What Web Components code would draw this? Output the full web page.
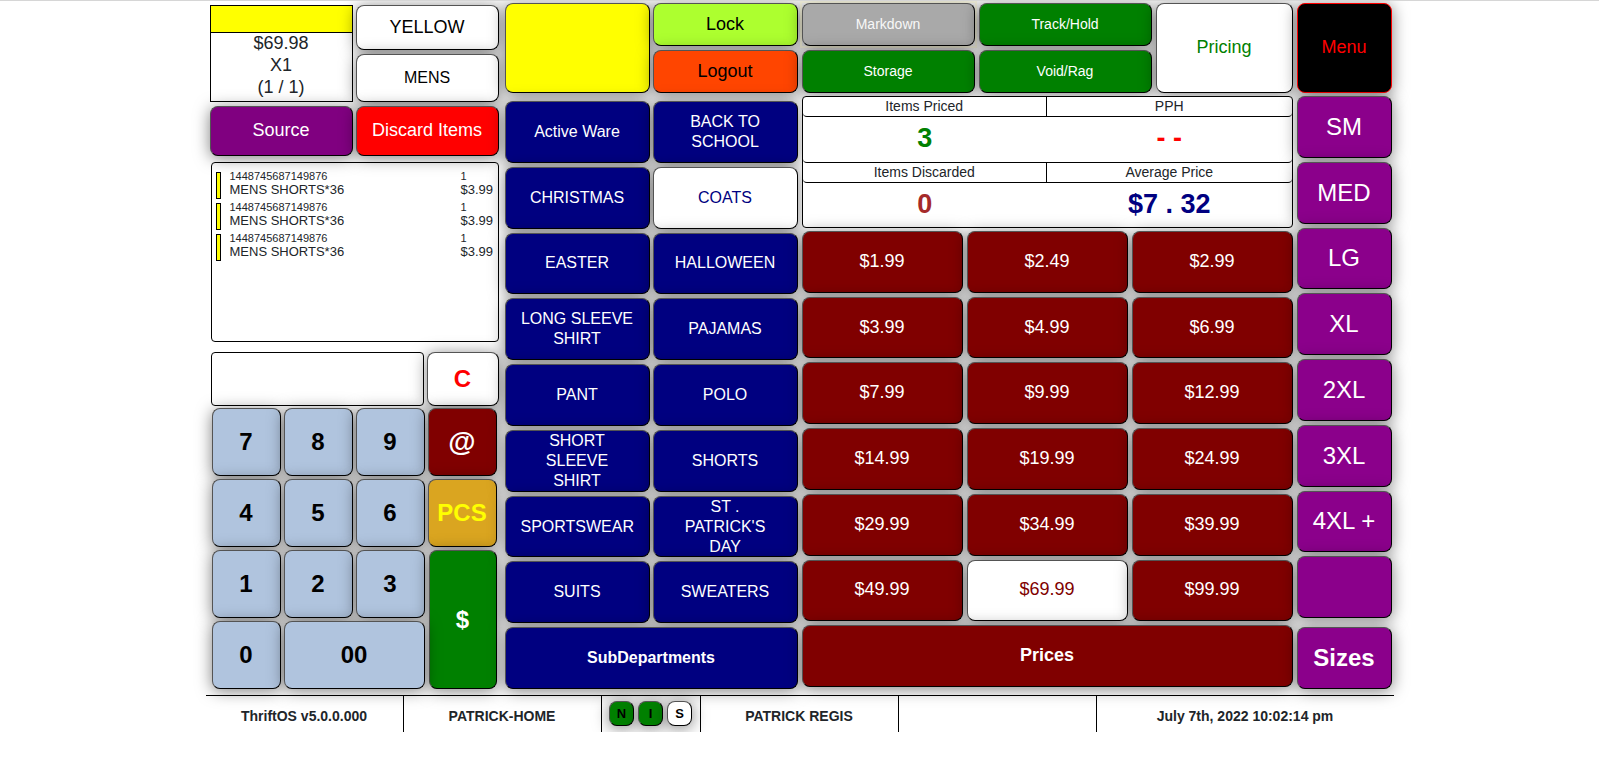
<!DOCTYPE html>
<html lang="en">
<head>
<meta charset="utf-8">
<meta name="viewport" content="width=device-width, initial-scale=1">
<title>ThriftOS</title>
<style>
  body { margin: 0; background: #fff; color: #212529; font-family: "Liberation Sans", Arial, sans-serif; border-top: 1px solid #d6d6d6; }
</style>
</head>
<body>
<pos-app></pos-app>
<script>
const define = (name, html, setup) => {
  const template = document.createElement('template');
  template.innerHTML = html;
  customElements.define(name, class extends HTMLElement {
    constructor() {
      super();
      this.attachShadow({ mode: 'open' }).append(template.content.cloneNode(true));
    }
    connectedCallback() { if (setup) setup(this, this.shadowRoot); }
  });
};

/* Push button: tone picks the colours, size the text size. */
define('pos-key', `
<style>
  :host { display: grid; min-width: 0; min-height: 0; --bg: #fff; --fg: #000; font-size: 16px; }
  button {
    box-sizing: border-box; width: 100%; min-width: 0; margin: 0; padding: 0 2px;
    font-family: inherit; font-size: inherit; font-weight: inherit; line-height: 20px;
    color: var(--fg); background: var(--bg);
    border: 1px outset #000; border-radius: 8px; cursor: pointer;
    box-shadow: 0 2px 16px 0 rgba(0,0,0,.5);
  }
  :host([size="xs"]) { font-size: 13px; }
  :host([size="sm"]) { font-size: 14px; }
  :host([size="lg"]) { font-size: 18px; }
  :host([size="sm"]) button, :host([size="lg"]) button { padding-bottom: 2px; }
  :host([size="xl"]) { font-size: 24px; }
  :host([size="xxl"]) { font-size: 28px; }
  :host([bold]) { font-weight: bold; }
  /* Long labels wrap inside the key and never make its row taller. */
  :host([wrap]) { contain: size; grid-template-rows: minmax(0, 1fr); }
  :host([wrap]) button { padding: 0 15px; min-height: 0; }
  :host([tone="navy"]) { --bg: #000080; --fg: #fff; }
  :host([tone="navy-on"]) { --fg: #000080; }
  :host([tone="maroon"]) { --bg: #800000; --fg: #fff; }
  :host([tone="maroon-on"]) { --fg: #800000; }
  :host([tone="size"]) { --bg: #8b008b; --fg: #fff; }
  :host([tone="purple"]) { --bg: #800080; --fg: #fff; }
  :host([tone="red"]) { --bg: #f00; --fg: #fff; }
  :host([tone="yellow"]) { --bg: #ff0; }
  :host([tone="lime"]) { --bg: #adff2f; }
  :host([tone="orange"]) { --bg: #ff4500; }
  :host([tone="green"]) { --bg: #008000; --fg: #fff; }
  :host([tone="lamp"]) { --bg: #008000; }
  :host([tone="green-on"]) { --fg: #008000; }
  :host([tone="steel"]) { --bg: #b0c4de; }
  :host([tone="gold"]) { --bg: #daa520; --fg: #ff0; }
  :host([tone="clear"]) { --fg: #f00; }
  :host([tone="menu"]) { --bg: #000; --fg: #f00; }
  :host([tone="menu"]) button { border: 1px solid #f00; }
  :host([tone="gray"]) { --bg: #a9a9a9; --fg: #f8f8f8; outline: 2px solid rgba(238,232,170,.3); }
</style>
<button type="button"><slot></slot></button>`, (host, root) => {
  const button = root.querySelector('button');
  button.disabled = host.hasAttribute('disabled');
  if (host.hasAttribute('label')) button.setAttribute('aria-label', host.getAttribute('label'));
});

/* Price tag preview: colour strip above price and counts. */
define('tag-card', `
<style>
  :host { display: block; box-sizing: border-box; border: 1px solid #000; background: #fff; text-align: center; font-size: 18px; line-height: 20px; }
  .strip { height: 26px; background: #ff0; border-bottom: 1px solid #000; }
  ::slotted(div) { height: 22px; }
</style>
<div class="strip"></div><slot></slot>`);

define('scan-item', `
<style>
  :host { display: grid; grid-template-columns: 5px minmax(0, 1fr) 32px; column-gap: 9px; height: 31px; line-height: 14px; font-size: 13px; }
  .swatch { box-sizing: border-box; height: 27px; margin-top: 3px; background: #ff0; border: 1px solid #000; }
  .small { font-size: 11px; }
</style>
<div class="swatch"></div>
<div><div class="small"><slot name="code"></slot></div><div><slot name="name"></slot></div></div>
<div><div class="small"><slot name="qty"></slot></div><div><slot name="price"></slot></div></div>`);

define('scan-list', `
<style>
  :host { display: block; box-sizing: border-box; border: 1px solid #000; border-radius: 4px; background: #fff; padding: 6px 5px 0 4px; }
</style>
<slot></slot>`);

define('stats-board', `
<style>
  :host { display: block; }
  .board { box-sizing: border-box; height: 132px; border: 1px solid #000; border-radius: 4px; background: #fff; display: grid; grid-template-rows: 20px 46px 20px 1fr; text-align: center; }
  .row { display: grid; grid-template-columns: 1fr 1fr; border-bottom: 1px solid #000; border-radius: 0 0 4px 4px; }
  .row:last-child { border-bottom: 0; }
  .head { font-size: 14px; line-height: 18px; }
  .head div:first-child { border-right: 1px solid #000; }
  .value { font-size: 27px; font-weight: bold; line-height: 42px; }
  .green { color: #008000; } .red { color: #f00; } .brown { color: #a52a2a; } .navy { color: #000080; }
</style>
<div class="board">
  <div class="row head"><div>Items Priced</div><div>PPH</div></div>
  <div class="row value"><div class="green">3</div><div class="red">- -</div></div>
  <div class="row head"><div>Items Discarded</div><div>Average Price</div></div>
  <div class="row value"><div class="brown">0</div><div class="navy">$7 . 32</div></div>
</div>`);

/* Tag preview, scanned items and keypad. */
define('scan-panel', `
<style>
  :host { display: block; padding: 4px 2px 0 0; }
  .top { display: grid; grid-template-columns: 1fr 1fr; grid-template-rows: 45px 48px 50px; gap: 4px 3px; }
  tag-card { grid-row: span 2; }
  scan-list { height: 180px; margin: 6px 0 10px 1px; }
  .entry { display: grid; grid-template-columns: minmax(0, 213fr) minmax(0, 72fr); column-gap: 3px; height: 54px; margin-left: 1px; }
  input { box-sizing: border-box; width: 100%; height: 100%; margin: 0; padding: 0 8px; border: 1px solid #000; border-radius: 4px; background: #fff; font: bold 24px "Liberation Sans", Arial, sans-serif; }
  .pad { display: grid; grid-template-columns: repeat(4, minmax(0, 1fr)); grid-auto-rows: 68px; gap: 3px; margin: 2px 2px 0; }
  .wide { grid-column: span 2; }
  .tall { grid-row: 3 / span 2; grid-column: 4; margin-left: 1px; }
</style>
<div class="top">
  <tag-card><div>$69.98</div><div>X1</div><div>(1 / 1)</div></tag-card>
  <pos-key size="lg">YELLOW</pos-key>
  <pos-key>MENS</pos-key>
  <pos-key tone="purple" size="lg">Source</pos-key>
  <pos-key tone="red" size="lg">Discard Items</pos-key>
</div>
<scan-list></scan-list>
<div class="entry">
  <input type="text" aria-label="Entry">
  <pos-key tone="clear" size="xl" bold>C</pos-key>
</div>
<div class="pad">
  <pos-key tone="steel" size="xl" bold>7</pos-key>
  <pos-key tone="steel" size="xl" bold>8</pos-key>
  <pos-key tone="steel" size="xl" bold>9</pos-key>
  <pos-key tone="maroon" size="xxl" bold>@</pos-key>
  <pos-key tone="steel" size="xl" bold>4</pos-key>
  <pos-key tone="steel" size="xl" bold>5</pos-key>
  <pos-key tone="steel" size="xl" bold>6</pos-key>
  <pos-key tone="gold" size="xl" bold>PCS</pos-key>
  <pos-key tone="steel" size="xl" bold>1</pos-key>
  <pos-key tone="steel" size="xl" bold>2</pos-key>
  <pos-key tone="steel" size="xl" bold>3</pos-key>
  <pos-key class="tall" tone="green" size="xl" bold>$</pos-key>
  <pos-key tone="steel" size="xl" bold>0</pos-key>
  <pos-key class="wide" tone="steel" size="xl" bold>00</pos-key>
</div>`, (host, root) => {
  const item = '<scan-item><span slot="code">1448745687149876</span><span slot="name">MENS SHORTS*36</span><span slot="qty">1</span><span slot="price">$3.99</span></scan-item>';
  root.querySelector('scan-list').innerHTML = item.repeat(3);
});

define('department-panel', `
<style>
  :host { display: grid; grid-template-rows: 90px 1fr; row-gap: 8px; padding-top: 2px; }
  .top { display: grid; grid-template-columns: 1fr 1fr; grid-template-rows: 1fr 1fr; gap: 4px 3px; }
  .tag { grid-row: span 2; }
  .grid { display: grid; grid-template-columns: 1fr 1fr; grid-template-rows: repeat(9, 1fr); gap: 4px 3px; }
  .total { grid-column: span 2; }
</style>
<div class="top">
  <pos-key class="tag" tone="yellow" label="Tag colour"></pos-key>
  <pos-key tone="lime" size="lg">Lock</pos-key>
  <pos-key tone="orange" size="lg">Logout</pos-key>
</div>
<div class="grid"></div>`, (host, root) => {
  const names = ['Active Ware', 'BACK TO SCHOOL', 'CHRISTMAS', 'COATS', 'EASTER', 'HALLOWEEN', 'LONG SLEEVE SHIRT', 'PAJAMAS', 'PANT', 'POLO', 'SHORT SLEEVE SHIRT', 'SHORTS', 'SPORTSWEAR', "ST . PATRICK'S DAY", 'SUITS', 'SWEATERS'];
  root.querySelector('.grid').innerHTML =
    names.map(n => `<pos-key wrap tone="${n === 'COATS' ? 'navy-on' : 'navy'}">${n}</pos-key>`).join('') +
    '<pos-key class="total" tone="navy" bold>SubDepartments</pos-key>';
});

define('price-panel', `
<style>
  :host { display: grid; grid-template-rows: 90px 132px 1fr; row-gap: 3px; padding: 2px 0; }
  .top { display: grid; grid-template-columns: minmax(0, 173fr) minmax(0, 173fr) minmax(0, 137fr); grid-template-rows: 1fr 1fr; gap: 4px; }
  .mode { grid-row: 1 / span 2; grid-column: 3; }
  .grid { display: grid; grid-template-columns: repeat(3, 1fr); grid-template-rows: repeat(7, 1fr); gap: 4px; }
  .total { grid-column: span 3; }
</style>
<div class="top">
  <pos-key tone="gray" size="sm" disabled>Markdown</pos-key>
  <pos-key tone="green" size="sm">Track/Hold</pos-key>
  <pos-key tone="green" size="sm">Storage</pos-key>
  <pos-key tone="green" size="sm">Void/Rag</pos-key>
  <pos-key class="mode" tone="green-on" size="lg">Pricing</pos-key>
</div>
<stats-board></stats-board>
<div class="grid"></div>`, (host, root) => {
  const prices = ['1.99', '2.49', '2.99', '3.99', '4.99', '6.99', '7.99', '9.99', '12.99', '14.99', '19.99', '24.99', '29.99', '34.99', '39.99', '49.99', '69.99', '99.99'];
  root.querySelector('.grid').innerHTML =
    prices.map(p => `<pos-key size="lg" tone="${p === '69.99' ? 'maroon-on' : 'maroon'}">$${p}</pos-key>`).join('') +
    '<pos-key class="total" tone="maroon" size="lg" bold>Prices</pos-key>';
});

define('size-panel', `
<style>
  :host { display: grid; grid-template-rows: 90px 1fr 62px; padding-top: 2px; }
  .grid { display: grid; grid-template-rows: repeat(8, 1fr); row-gap: 4px; padding: 3px 0 9px; }
</style>
<pos-key tone="menu" size="lg">Menu</pos-key>
<div class="grid"></div>
<pos-key tone="size" size="xl" bold>Sizes</pos-key>`, (host, root) => {
  root.querySelector('.grid').innerHTML = ['SM', 'MED', 'LG', 'XL', '2XL', '3XL', '4XL +', '']
    .map(s => `<pos-key tone="size" size="xl"${s ? '' : ' label="Unassigned size"'}>${s}</pos-key>`).join('');
});

define('status-bar', `
<style>
  :host { display: grid; grid-template-columns: 2fr 2fr 1fr 2fr 2fr 3fr; height: 36px; border-top: 1px solid #000; font-size: 14px; font-weight: bold; line-height: 40px; text-align: center; }
  .cell { height: 36px; border-right: 1px solid #000; min-width: 0; box-sizing: border-box; }
  .cell:last-child { border-right: 0; }
  .lamps { display: grid; grid-template-columns: repeat(3, 25px); grid-template-rows: 25px; gap: 4px; justify-content: center; padding-top: 5px; }
</style>
<div class="cell">ThriftOS v5.0.0.000</div>
<div class="cell">PATRICK-HOME</div>
<div class="cell lamps">
  <pos-key tone="lamp" size="xs" bold>N</pos-key>
  <pos-key tone="lamp" size="xs" bold>I</pos-key>
  <pos-key size="xs" bold>S</pos-key>
</div>
<div class="cell">PATRICK REGIS</div>
<div class="cell"></div>
<div class="cell"><time datetime="2022-07-07T22:02:14">July 7th, 2022 10:02:14 pm</time></div>`);

define('pos-app', `
<style>
  :host { display: block; max-width: 1188px; margin: 0 auto; }
  main { display: grid; grid-template-columns: minmax(0, 291fr) minmax(0, 293fr) minmax(0, 491fr) minmax(0, 95fr); column-gap: 4px; padding: 0 2px 6px 4px; }
</style>
<main>
  <scan-panel></scan-panel>
  <department-panel></department-panel>
  <price-panel></price-panel>
  <size-panel></size-panel>
</main>
<status-bar></status-bar>`);
</script>
</body>
</html>
